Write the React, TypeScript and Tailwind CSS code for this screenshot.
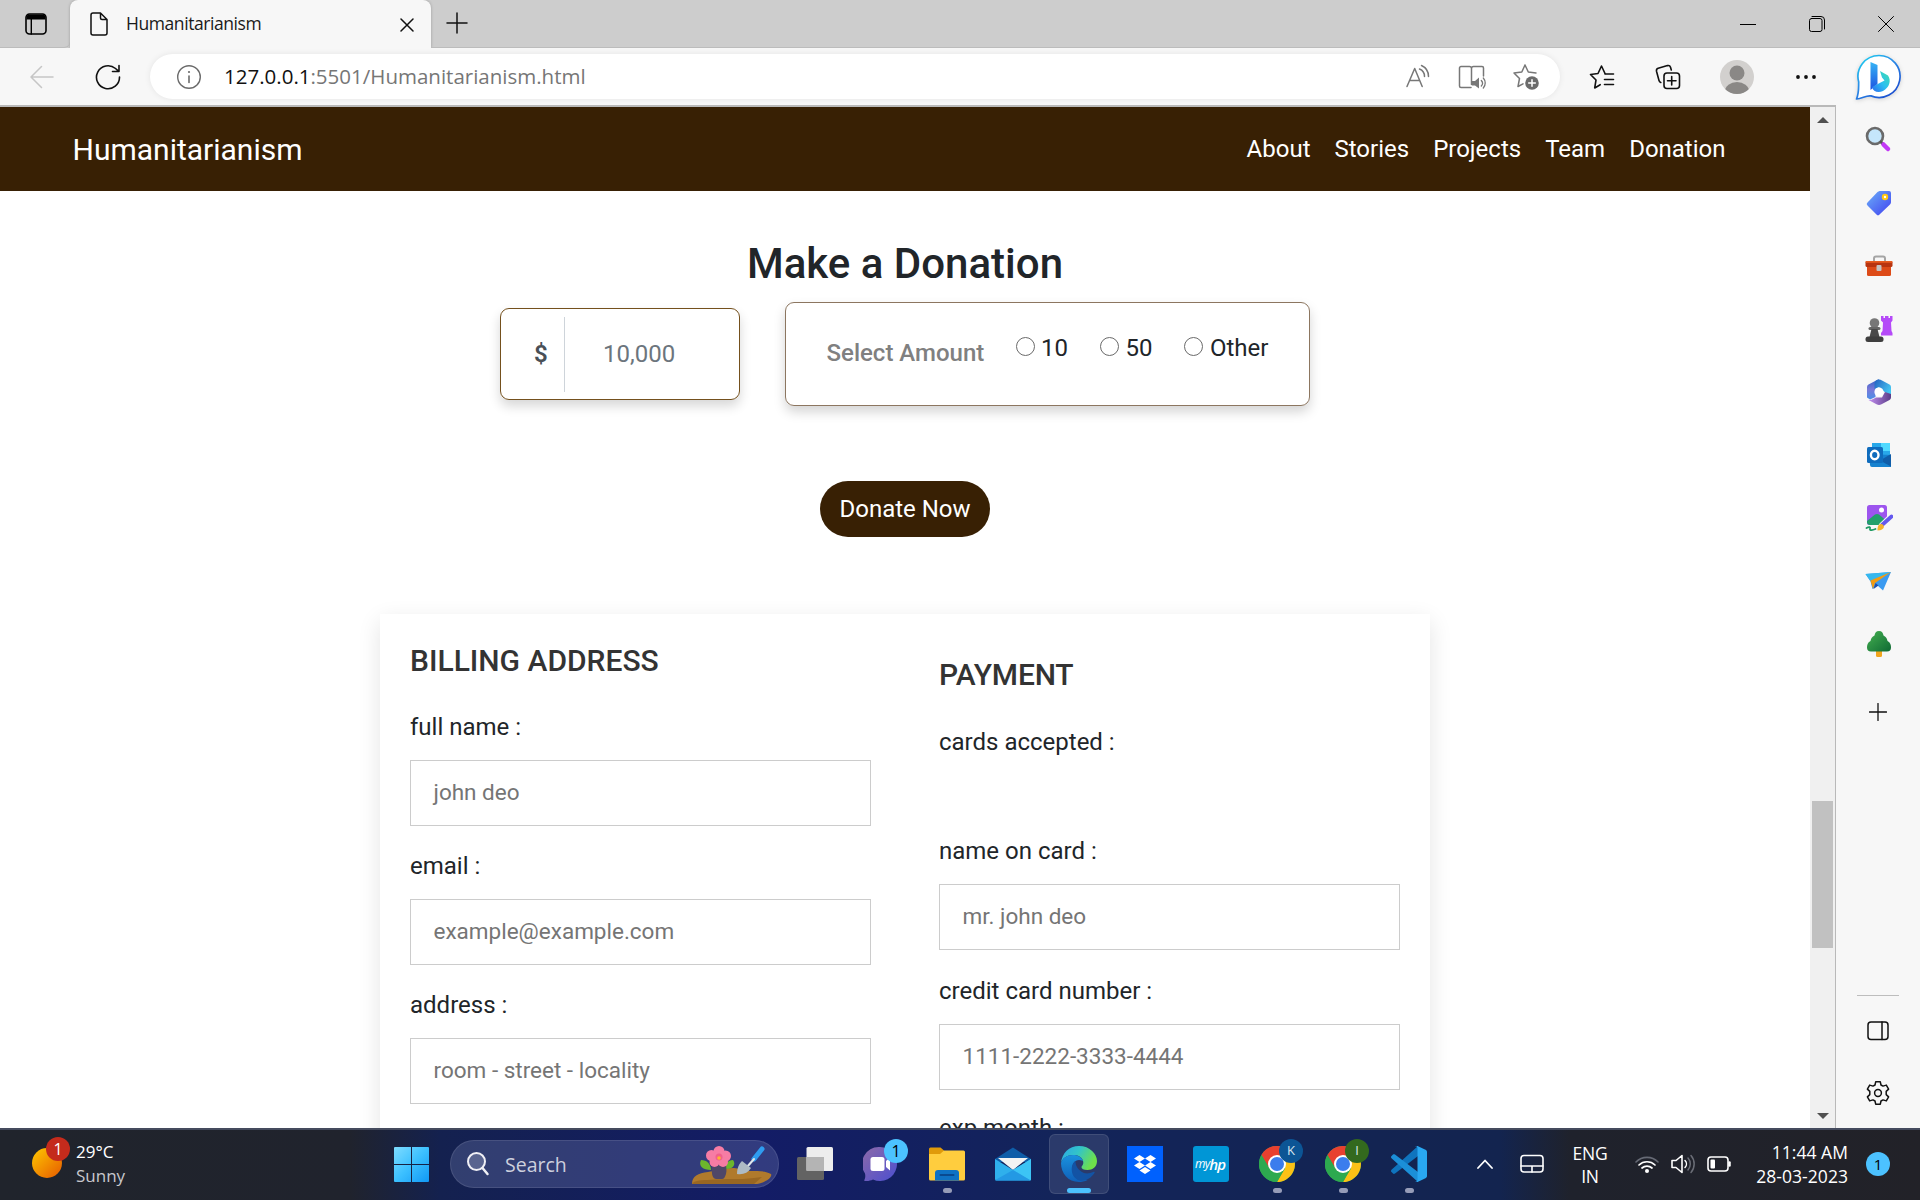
import React from "react";

type SvgProps = { className?: string; children: React.ReactNode; box: string };

function Svg({ className, children, box }: SvgProps) {
  return (
    <svg viewBox={box} className={`block shrink-0 ${className ?? ""}`} fill="none" strokeLinecap="round" strokeLinejoin="round">
      {children}
    </svg>
  );
}

/* Centres one control in a column of fixed width */
function Slot({ className, children }: { className: string; children: React.ReactNode }) {
  return <div className={`flex shrink-0 items-center justify-center ${className}`}>{children}</div>;
}

function TabStrip() {
  return (
    <div className="flex h-12 shrink-0 bg-[#cdcdcd]">
      <div className="flex w-[70px] shrink-0 items-center rounded-br-md border-b border-[#bcbcbc] pl-[25px]">
        <Svg box="0 0 22 22" className="size-[22px]">
          <rect x="1" y="1" width="20" height="20" rx="3.5" stroke="#000" strokeWidth="1.6" />
          <path d="M1.5 6.5V4.5a3 3 0 0 1 3-3h13a3 3 0 0 1 3 3v2z" fill="#000" />
          <path d="M6.3 6v15" stroke="#000" strokeWidth="1.4" />
        </Svg>
      </div>
      <div className="flex w-[361px] shrink-0 items-center rounded-t-lg bg-[#f7f7f7] pl-5 shadow-[0_0_3px_rgba(0,0,0,0.25)]">
        <Svg box="0 0 18 24" className="h-6 w-[18px]">
          <path d="M3 1h7.5L17 7.5V21a2 2 0 0 1-2 2H3a2 2 0 0 1-2-2V3a2 2 0 0 1 2-2zM10.500 1v5a1.500 1.500 0 0 0 1.500 1.500h5" stroke="#111" strokeWidth="1.5" />
        </Svg>
        <span className="mb-0.5 ml-[18px] w-[270px] text-[17.500px] leading-6 tracking-[-0.430px] text-[#1a1a1a]">Humanitarianism</span>
        <Svg box="0 0 14 14" className="mt-0.5 ml-[4px] size-3.5">
          <path d="M1 1l12 12M13 1L1 13" stroke="#111" strokeWidth="1.500" />
        </Svg>
      </div>
      <div className="flex flex-1 items-center border-b border-[#bcbcbc] pl-[15px]">
        <Svg box="0 0 22 22" className="-mt-0.5 size-[22px]">
          <path d="M11 1v20M1 11h20" stroke="#111" strokeWidth="1.500" />
        </Svg>
        <div className="ml-auto flex">
          <Slot className="w-[69px]">
            <Svg box="0 0 16 16" className="size-4"><path d="M0 8.500h16" stroke="#000" strokeWidth="1" /></Svg>
          </Slot>
          <Slot className="w-[69px]">
            <Svg box="0 0 16 16" className="size-4">
              <rect x="0.500" y="2.500" width="12.500" height="13" rx="2" stroke="#000" />
              <path d="M3 0.500h9a3.500 3.500 0 0 1 3.500 3.500v9" stroke="#000" />
            </Svg>
          </Slot>
          <Slot className="w-[69px]">
            <Svg box="0 0 16 16" className="size-4"><path d="M0.500 0.500l15 15M15.500 0.500l-15 15" stroke="#000" /></Svg>
          </Slot>
        </div>
      </div>
    </div>
  );
}

function Toolbar() {
  return (
    <div className="flex h-[57px] shrink-0 items-center bg-[#f7f7f7]">
      <Slot className="w-[66px] pl-[18px]">
        <Svg box="0 0 24 24" className="size-6"><path d="M23 12H1.500M11.500 1.500L1 12l10.500 10.500" stroke="#c6c6c6" strokeWidth="1.500" /></Svg>
      </Slot>
      <Slot className="w-[84px]">
        <Svg box="0 0 26 26" className="size-[26px]">
          <path d="M24.500 13A11.500 11.500 0 1 1 20.500 4.500L23.500 7.200M24 1.500v6h-6.500" stroke="#111" strokeWidth="1.600" />
        </Svg>
      </Slot>
      <div className="flex h-[45px] w-[1410px] shrink-0 items-center rounded-full bg-white shadow-[0_0_6px_rgba(0,0,0,0.08)]">
        <Slot className="ml-[26px] w-[26px]">
          <Svg box="0 0 26 26" className="size-[26px]">
            <circle cx="13" cy="13" r="11.300" stroke="#6b6b6b" strokeWidth="1.400" />
            <path d="M13 12v6.500" stroke="#6b6b6b" strokeWidth="1.600" />
            <circle cx="13" cy="8" r="1.100" fill="#6b6b6b" />
          </Svg>
        </Slot>
        <span className="mb-0.5 ml-[22px] flex-1 text-[20.500px] leading-7 text-[#767676]">
          <span className="text-[#111]">127.0.0.1</span>:5501/Humanitarianism.html
        </span>
        <Slot className="w-[54px]">
          <Svg box="0 0 26 26" className="mb-0.5 size-[26px]">
            <path d="M2 23.500L9.700 5.500l7.500 18M4.700 17.500h10" stroke="#777" strokeWidth="1.500" />
            <path d="M16.500 2.500a12 12 0 0 1 7 11M14.500 6a8 8 0 0 1 5 7.500" stroke="#777" strokeWidth="1.500" />
          </Svg>
        </Slot>
        <Slot className="w-[54px]">
          <Svg box="0 0 28 26" className="h-[26px] w-7">
            <path d="M13 23.500H3a1.500 1.500 0 0 1-1.500-1.500V4A1.500 1.500 0 0 1 3 2.500h8.500a2 2 0 0 1 2 2v16M13.500 4.500a2 2 0 0 1 2-2H24A1.500 1.500 0 0 1 25.500 4v8" stroke="#777" strokeWidth="1.500" />
            <path d="M14 17h3l4-3.500v11L17 21.500h-3z" fill="#777" />
            <path d="M23.300 16.500a4 4 0 0 1 0 5.500M25.300 14a7.500 7.500 0 0 1 0 10" stroke="#777" strokeWidth="1.300" />
          </Svg>
        </Slot>
        <Slot className="mr-[7px] w-[54px]">
          <Svg box="0 0 28 28" className="size-7">
            <path d="M13 2l3.300 7 7.700 1M13 2L9.800 9 2 10l5.500 5.500L6 23.500l5-2.600" stroke="#777" strokeWidth="1.500" />
            <circle cx="20" cy="20" r="6.800" fill="#6b6b6b" />
            <path d="M20 16.700v6.600M16.700 20h6.600" stroke="#fff" strokeWidth="1.500" />
          </Svg>
        </Slot>
      </div>
      <Slot className="ml-[9px] w-[66px]">
        <Svg box="0 0 26 26" className="size-[26px]">
          <path d="M16 9.500L12.500 2 9 9.500l-7.500 1 5.500 5.500-1.300 8 5.500-3.300" stroke="#111" strokeWidth="1.600" />
          <path d="M16 10h8.500M15.500 15.500h9M15.500 20.500h9" stroke="#111" strokeWidth="1.600" />
        </Svg>
      </Slot>
      <Slot className="w-[66px]">
        <Svg box="0 0 26 26" className="size-[26px]">
          <rect x="9" y="9" width="15.500" height="15.500" rx="3" stroke="#111" strokeWidth="1.600" />
          <path d="M16.700 12.500v8.500M12.500 16.700H21M5.800 18.500a3 3 0 0 1-1.800-2L1.500 7.200A2.500 2.500 0 0 1 3.200 4.300l9.300-2.700a2.500 2.500 0 0 1 3 1.700L16.300 6" stroke="#111" strokeWidth="1.600" />
        </Svg>
      </Slot>
      <Slot className="w-[71px]">
        <Svg box="0 0 34 34" className="size-[34px]">
          <clipPath id="face"><circle cx="17" cy="17" r="17" /></clipPath>
          <g clipPath="url(#face)">
            <rect width="34" height="34" fill="#d2d0ce" />
            <circle cx="17" cy="13" r="7.500" fill="#8a8886" />
            <ellipse cx="17" cy="31" rx="12" ry="9" fill="#8a8886" />
          </g>
        </Svg>
      </Slot>
      <Slot className="w-[68px]">
        <Svg box="0 0 20 4" className="h-1 w-5"><g fill="#111"><circle cx="2" cy="2" r="1.900" /><circle cx="10" cy="2" r="1.900" /><circle cx="18" cy="2" r="1.900" /></g></Svg>
      </Slot>
      <Slot className="ml-[15px] w-[46px]">
        <Svg box="0 0 46 48" className="h-12 w-[46px] drop-shadow-sm">
          <defs>
            <linearGradient id="ring" x1="0" y1="0.100" x2="0.700" y2="1"><stop stopColor="#1cd0f0" /><stop offset="0.450" stopColor="#2b8de8" /><stop offset="1" stopColor="#1b4fd0" /></linearGradient>
            <linearGradient id="bstem" x1="0" y1="0" x2="0" y2="1"><stop stopColor="#36b4f5" /><stop offset="1" stopColor="#1c52e0" /></linearGradient>
            <linearGradient id="bbowl" x1="1" y1="0" x2="0" y2="1"><stop stopColor="#3fe0a8" /><stop offset="0.500" stopColor="#2bc0f0" /><stop offset="1" stopColor="#2a6cf0" /></linearGradient>
          </defs>
          <path d="M24 2.500A21 21 0 1 1 16 42.900C11 42 7 46 1.500 46c2.500-6 2-9.500 2.200-17A21 21 0 0 1 24 2.500z" fill="#fff" stroke="url(#ring)" strokeWidth="1.700" />
          <path d="M15.500 9l7 3v19l-7 6z" fill="url(#bstem)" />
          <path d="M25 18l8 4.500c3.500 5 1.500 12-5 15.500-5 2.500-10 .5-11-4l12.500-6.500-2.500-3z" fill="url(#bbowl)" />
        </Svg>
      </Slot>
    </div>
  );
}

const NAV_LINKS = ["About", "Stories", "Projects", "Team", "Donation"];

function Navbar() {
  return (
    <nav className="flex h-[84px] shrink-0 items-center justify-between bg-[#382004] pr-[84.500px] pl-[72.500px] text-white">
      <span className="mt-0.5 text-[30px] leading-9">Humanitarianism</span>
      <div className="flex gap-6 text-2xl">
        {NAV_LINKS.map((l) => <span key={l}>{l}</span>)}
      </div>
    </nav>
  );
}

function RadioOption({ label }: { label: string }) {
  return (
    <label className="flex items-center">
      <span className="mb-1 size-[19px] rounded-full border border-[#6a6a6a] bg-white" />
      <span className="ml-[6.500px]">{label}</span>
    </label>
  );
}

function Donation() {
  return (
    <section className="flex flex-col items-center">
      <h1 className="mt-12 text-[42px] leading-[50px] font-medium">Make a Donation</h1>
      <div className="mt-[13px] flex items-start gap-[45px]">
        <div className="mt-1.5 flex h-[92px] w-[240px] items-center rounded-[9px] border border-[#74501d] shadow-[0_6px_12px_rgba(0,0,0,0.16)]">
          <span className="w-[63px] pl-[33px] font-semibold text-[#495057]">$</span>
          <span className="h-[75px] border-l border-[#ced4da]" />
          <span className="pl-[38px] text-[#6c757d]">10,000</span>
        </div>
        <div className="flex h-[104px] w-[525px] rounded-[9px] border border-[#8c7660] pt-[27px] pl-[40.500px] shadow-[0_6px_12px_rgba(0,0,0,0.17)]">
          <span className="mt-[7px] w-[189px] font-medium text-[#808080]">Select Amount</span>
          <div className="flex h-9 gap-8">
            <RadioOption label="10" />
            <RadioOption label="50" />
            <RadioOption label="Other" />
          </div>
        </div>
      </div>
      <button className="mt-[75px] h-14 w-[170px] rounded-[28px] bg-[#382004] text-white">Donate Now</button>
    </section>
  );
}

function Field({ label, hint }: { label: string; hint: string }) {
  return (
    <div>
      <div className="leading-9">{label}</div>
      <div className="mt-[15px] flex h-[66px] items-center border border-[#ccc] pb-0.5 pl-[22.500px] text-[22.500px] text-[#757575]">{hint}</div>
    </div>
  );
}

function Billing() {
  return (
    <section className="mt-[77px] flex h-[700px] w-[1050px] shrink-0 gap-[68px] self-center bg-white px-[30px] shadow-[0_7px_22px_rgba(0,0,0,0.11)]">
      <div className="w-[461px] pt-[29px]">
        <h3 className="mb-[30px] text-[30px] leading-9 font-medium text-[#333]">BILLING ADDRESS</h3>
        <div className="flex flex-col gap-[22px]">
          <Field label="full name :" hint="john deo" />
          <Field label="email :" hint="example@example.com" />
          <Field label="address :" hint="room - street - locality" />
        </div>
      </div>
      <div className="w-[461px] pt-[43px]">
        <h3 className="mb-[31px] text-[30px] leading-9 font-medium tracking-[-0.200px] text-[#333]">PAYMENT</h3>
        <div className="h-[109px] leading-9">cards accepted :</div>
        <div className="flex flex-col gap-[22.500px]">
          <Field label="name on card :" hint="mr. john deo" />
          <Field label="credit card number :" hint="1111-2222-3333-4444" />
          <div className="-mt-0.5 leading-9">exp month :</div>
        </div>
      </div>
    </section>
  );
}

function Scrollbar() {
  return (
    <div className="flex w-[26px] shrink-0 flex-col items-center border-r border-[#b9b9b9] bg-[#f0f0f0]">
      <Svg box="0 0 12 6" className="mt-[10px] h-1.5 w-3"><path d="M0 6L6 0l6 6z" fill="#505050" /></Svg>
      <div className="mt-[678px] h-[147px] w-[21px] bg-[#c1c1c1]" />
      <Svg box="0 0 12 6" className="mt-[165px] h-1.5 w-3"><path d="M0 0l6 6 6-6z" fill="#505050" /></Svg>
    </div>
  );
}

function SearchApp() {
  return (
    <Svg box="0 0 28 28" className="mr-0.5 mb-0.5 size-7">
      <circle cx="11" cy="11" r="8" fill="#c5e6fb" stroke="#6a6a6a" strokeWidth="2.600" />
      <path d="M17 17l3 3" stroke="#555" strokeWidth="3" />
      <path d="M19.500 19.500l4.500 4.500" stroke="#c239f5" strokeWidth="4.500" />
    </Svg>
  );
}
function TagApp() {
  return (
    <Svg box="0 0 28 28" className="size-7">
      <defs><linearGradient id="tag" x1="0" y1="0" x2="1" y2="1"><stop stopColor="#6cb0f8" /><stop offset="1" stopColor="#4040f0" /></linearGradient></defs>
      <path d="M14.500 2H24a2 2 0 0 1 2 2v9c0 1-.5 2-1 2.500L14.500 25.500a2 2 0 0 1-3 0L2.500 16.500a2 2 0 0 1 0-3L12.500 3z" fill="url(#tag)" />
      <circle cx="20" cy="8" r="2.200" stroke="#ffc814" strokeWidth="2" fill="#fff" />
    </Svg>
  );
}
function ToolboxApp() {
  return (
    <Svg box="0 0 28 28" className="size-7">
      <path d="M9 9V6.500A2 2 0 0 1 11 4.500h7a2 2 0 0 1 2 2V9" stroke="#a5a5a5" strokeWidth="2" />
      <rect x="2" y="12" width="24" height="12" rx="1.500" fill="#dd4b18" />
      <rect x="0.500" y="9" width="27" height="6" rx="1.500" fill="#b83410" />
      <rect x="0.500" y="9" width="27" height="1.800" rx="0.900" fill="#e85c20" />
      <rect x="11.500" y="13" width="5" height="6" rx="1" fill="#c4c4c4" />
    </Svg>
  );
}
function ChessApp() {
  return (
    <Svg box="0 0 28 28" className="size-7">
      <path d="M16 1h2.500v2H20V1h3.500v2H25V1h2.500v4.500L26 7.500 26.500 16l1 2v2.500H16V18l1.500-2L18 7.500l-2-2z" fill="#b54af8" />
      <circle cx="9.500" cy="8" r="4.800" fill="#777" />
      <rect x="3.500" y="12" width="12" height="3" rx="1.500" fill="#666" />
      <path d="M6.500 14h6l2 8h-10z" fill="#4a4a4a" />
      <rect x="0.500" y="21.500" width="18" height="5.500" rx="2.500" fill="#3f3f3f" />
    </Svg>
  );
}
function OfficeApp() {
  return (
    <Svg box="0 0 28 28" className="size-7">
      <defs>
        <linearGradient id="o1" x1="0" y1="0" x2="0" y2="1"><stop stopColor="#2f62c4" /><stop offset="0.500" stopColor="#7a78d8" /><stop offset="1" stopColor="#4a90e8" /></linearGradient>
        <linearGradient id="o2" x1="0" y1="0" x2="1" y2="0.600"><stop stopColor="#2460c0" /><stop offset="1" stopColor="#45c6f2" /></linearGradient>
        <linearGradient id="o3" x1="1" y1="0" x2="0" y2="0"><stop stopColor="#5a3d88" /><stop offset="1" stopColor="#c38ff0" /></linearGradient>
      </defs>
      <path d="M14 1L3.500 6.500A3 3 0 0 0 2 9v10.500l3 2 5.500-2.500V9z" fill="url(#o1)" />
      <path d="M11 2.500c2-1.500 4-1.500 6 0l7.500 4A3 3 0 0 1 26 9v9L19 13.500 14 9.200 9.500 11V6c0-1.500.5-2.500 1.500-3.500z" fill="url(#o2)" />
      <path d="M26 16v3.500a3 3 0 0 1-1.500 2.500l-8 4.300c-1.700.9-3.300.9-5 0L3.500 22C7 22.500 9 20.500 11 19.500h6l3-5.500z" fill="url(#o3)" />
      <circle cx="14" cy="14" r="4.600" fill="#fff" />
    </Svg>
  );
}
function OutlookApp() {
  return (
    <Svg box="0 0 28 28" className="size-7">
      <path d="M7 2h18v12H7z" fill="#28a8ea" />
      <path d="M16 2h9v8h-9z" fill="#50d9ff" />
      <path d="M4 13l22 1v12H7a2 2 0 0 1-2-2z" fill="#1682cf" />
      <path d="M26 13l-11 6.500 11 6z" fill="#105da8" />
      <rect x="2" y="6" width="16" height="16" rx="1.500" fill="#0f6cbd" />
      <ellipse cx="9.700" cy="14" rx="3.800" ry="4.200" stroke="#fff" strokeWidth="2.400" />
    </Svg>
  );
}
function ImageApp() {
  return (
    <Svg box="0 0 28 28" className="size-7">
      <rect x="2" y="1" width="20" height="20" rx="2.500" fill="#9d55ee" />
      <path d="M2 17l8-6.500c1-.8 3-.8 4 0l7 6V18a3 3 0 0 1-3 3H5a3 3 0 0 1-3-3z" fill="#22a06b" />
      <circle cx="16.500" cy="6" r="2.500" fill="#fff" />
      <path d="M26.500 12.500L17 21.500" stroke="#f7f7f7" strokeWidth="6.500" />
      <path d="M26.500 12.500L17 21" stroke="#6458ee" strokeWidth="3.800" />
      <path d="M12.500 26.500c0-4 1-7 4-6.500 3.500.5 4 6.500-4 6.500z" fill="#f5b32c" />
      <path d="M1.500 24c3-1.500 4-1 3.500 1s3 1 5.500 0" stroke="#1f9a63" strokeWidth="1.800" />
    </Svg>
  );
}
function SendApp() {
  return (
    <Svg box="0 0 28 28" className="size-7">
      <path d="M0.500 7L26 5l-8 18.500-5.500-5-5 3.500-2-7.500z" fill="#3a9af0" />
      <path d="M0.500 7L26 5 5.500 14z" fill="#35b8ee" />
      <path d="M26 5L5.500 13.500 8 22l2-6z" fill="#f39c12" />
      <path d="M8.500 22l2-6 3 2.500z" fill="#1c50b0" />
    </Svg>
  );
}
function TreeApp() {
  return (
    <Svg box="0 0 28 28" className="size-7">
      <defs><linearGradient id="tree" x1="0" y1="0" x2="1" y2="1"><stop stopColor="#45b050" /><stop offset="1" stopColor="#0f6a34" /></linearGradient></defs>
      <rect x="11" y="19" width="6" height="8" rx="1.500" fill="#f2a51e" />
      <path d="M14 1c3 0 4 2 4.500 4.500C21.500 7 22 9 22.500 11c3 1.500 3.500 4 3.500 6.500A4 4 0 0 1 22 21.500H6A4 4 0 0 1 2 17.500C2 15 2.500 12.500 5.500 11 6 9 6.500 7 9.500 5.500 10 3 11 1 14 1z" fill="url(#tree)" />
    </Svg>
  );
}

function Sidebar() {
  const apps = [SearchApp, TagApp, ToolboxApp, ChessApp, OfficeApp, OutlookApp, ImageApp, SendApp, TreeApp];
  return (
    <aside className="flex w-[84px] shrink-0 flex-col items-center bg-[#f7f7f7] pt-[3px]">
      {apps.map((App, i) => (
        <div key={i} className="flex h-[63.100px] w-full shrink-0 items-center justify-center pl-0.5"><App /></div>
      ))}
      <Svg box="0 0 18 18" className="mt-[27px] -ml-px size-[18px]"><path d="M9 0.500v17M0.500 9h17" stroke="#111" strokeWidth="1.300" /></Svg>
      <div className="mt-auto h-px w-[42px] bg-[#bdbdbd]" />
      <Svg box="0 0 22 20" className="mt-[25px] h-5 w-[22px]">
        <rect x="1" y="1" width="20" height="17.500" rx="3" stroke="#111" strokeWidth="1.500" />
        <path d="M15 1v17.500" stroke="#111" strokeWidth="1.500" />
      </Svg>
      <Svg box="0 0 24 24" className="mt-[40px] mb-[23px] size-6">
        <circle cx="12" cy="12" r="3.400" stroke="#111" strokeWidth="1.500" />
        <path d="M9.700 0.800h4.600l.7 3.200 2 1.100 3.300-1 2.300 4-2.400 2.300v3.200l2.400 2.300-2.300 4-3.300-1-2 1.100-.7 3.200H9.700L9 20l-2-1.100-3.300 1-2.300-4 2.400-2.300v-3.200L1.400 8.100l2.300-4 3.300 1L9 4z" stroke="#111" strokeWidth="1.500" />
      </Svg>
    </aside>
  );
}

function Chrome({ letter, badge }: { letter: string; badge: string }) {
  return (
    <div className="relative">
      <Svg box="0 0 36 36" className="size-9">
        <circle cx="18" cy="18" r="18" fill="#34a853" />
        <path d="M18 18L2.400 9A18 18 0 0 1 33.600 9z" fill="#e8402f" />
        <path d="M18 9.500h15.800A18 18 0 0 1 18 36l8-13.500z" fill="#fbc116" />
        <path d="M2.400 9l8 13.500L18 10z" fill="#e8402f" />
        <path d="M2.400 9a18 18 0 0 0 15.600 27l7.500-13.500-15 0z" fill="#2da94f" />
        <circle cx="18" cy="18" r="9" fill="#fff" />
        <circle cx="18" cy="18" r="7" fill="#3b7ded" />
      </Svg>
      <span className={`absolute -top-[7px] left-5 flex size-6 items-center justify-center rounded-full text-[13px] text-[#d8e4ee] ${badge}`}>{letter}</span>
    </div>
  );
}

function TaskView() {
  return (
    <Svg box="0 0 36 36" className="size-9">
      <rect x="0" y="11" width="27" height="23" rx="1.500" fill="#636363" />
      <rect x="9.500" y="1" width="26.500" height="24" rx="1.500" fill="#ededed" />
      <path d="M9.500 11H27v14H9.500z" fill="#b4b4b4" />
    </Svg>
  );
}
function Chat() {
  return (
    <div className="relative">
      <Svg box="0 0 36 36" className="size-9">
        <defs><linearGradient id="chat" x1="0" y1="0" x2="1" y2="1"><stop stopColor="#8d6aa8" /><stop offset="1" stopColor="#4c4fd0" /></linearGradient></defs>
        <path d="M17 1a17 17 0 1 1-7 32.500C7 35 3 35.500 1 34.500c1.500-2 1.500-5 1-7A17 17 0 0 1 17 1z" fill="url(#chat)" />
        <rect x="7.500" y="11" width="14" height="14" rx="2.500" fill="#fff" />
        <path d="M23 15l4-3.500v13L23 21z" fill="#fff" />
      </Svg>
      <span className="absolute -top-[7px] left-[21px] flex size-6 items-center justify-center rounded-full bg-[#4cc2ff] text-base text-black">1</span>
    </div>
  );
}
function Folder() {
  return (
    <Svg box="0 0 36 36" className="size-9">
      <path d="M0 3a1.500 1.500 0 0 1 1.500-1.500h10L15 4.500V10H0z" fill="#e09a0a" />
      <path d="M0 8h11l4-3.500h19.500A1.500 1.500 0 0 1 36 6v27a1.500 1.500 0 0 1-1.500 1.500h-33A1.500 1.500 0 0 1 0 33z" fill="#ffcd3e" />
      <path d="M6 34.500V27a3 3 0 0 1 3-3h18a3 3 0 0 1 3 3v7.500z" fill="#0f72c4" />
      <path d="M11.500 29h13" stroke="#0a4a90" strokeWidth="2" />
    </Svg>
  );
}
function Mail() {
  return (
    <Svg box="0 0 36 36" className="size-9">
      <path d="M0 13L18 1.500 36 13v3H0z" fill="#0f5da8" />
      <path d="M3 12h30L18 24z" fill="#f3f3f3" />
      <path d="M36 13v20a1.500 1.500 0 0 1-1.500 1.500h-33A1.500 1.500 0 0 1 0 33V13l18 11z" fill="#2fb0ec" />
      <path d="M36 13L18 24l17 10.500a1.500 1.500 0 0 0 1-1.500z" fill="#3cc4f5" />
      <path d="M0 13l18 11 17.500 10.300c-.3.200-.6.200-1 .2h-33c-.5 0-1-.2-1.200-.6L18 24z" fill="#2399e4" />
    </Svg>
  );
}
function EdgeLogo() {
  return (
    <Svg box="0 0 36 36" className="size-9">
      <defs>
        <linearGradient id="e1" x1="0" y1="0" x2="1" y2="0.400"><stop stopColor="#2aa6e8" /><stop offset="0.500" stopColor="#33c4c8" /><stop offset="1" stopColor="#6ee04a" /></linearGradient>
        <linearGradient id="e2" x1="0" y1="0" x2="0" y2="1"><stop stopColor="#1a92de" /><stop offset="1" stopColor="#0f5fb8" /></linearGradient>
      </defs>
      <path d="M0 17C1 7 8 0 18 0c11 0 18 8 18 15 0 6-4.500 9-9.500 9-4 0-6-1.500-6-2.800 0-1.200 1.800-1.700 1.800-4.700 0-4-4-7.500-10-7.500C6 9 1.500 12 0 17z" fill="url(#e1)" />
      <path d="M0 17c1.500-5 6-8 12-8 5 0 9 2.500 10 6-7-3-11 2-10.500 7 .5 7 7 13 15 12-3 1.500-6 2-8.500 2C7 36 0 27 0 17z" fill="url(#e2)" />
      <path d="M14.500 15c-6 4-5 17 4 19.500 5 1 11-1.500 15-7.500.5-1-.5-1.500-1.300-1-4 2-9 2-12-.5-4-3-5.700-6-5.700-10.500z" fill="#1353a4" />
    </Svg>
  );
}
function Dropbox() {
  return (
    <Svg box="0 0 36 36" className="size-9">
      <rect width="36" height="36" fill="#0061fe" />
      <path d="M12.500 9L18 12.500 12.500 16 7 12.500zM23.500 9l5.500 3.500-5.500 3.500-5.500-3.500zM12.500 16l5.500 3.500-5.500 3.500L7 19.500zM23.500 16l5.500 3.500-5.500 3.500-5.500-3.500zM18 21l5.500 3.500L18 28l-5.500-3.500z" fill="#fff" />
    </Svg>
  );
}
function MyHp() {
  return (
    <div className="flex size-9 items-center justify-center rounded-[3px] bg-[#0096d6] pr-0.5 text-white italic">
      <span className="text-[12px] tracking-[-0.8px]">my</span><span className="text-[15px] font-semibold tracking-[-1px]">hp</span>
    </div>
  );
}
function VsCode() {
  return (
    <Svg box="0 0 36 36" className="size-9">
      <path d="M27 0v10L4 27.500c-.8.500-1.500.5-2 0L.5 26c-.7-.7-.7-1.500 0-2.300z" fill="#0f74be" />
      <path d="M27 36V26L4 8.500c-.8-.5-1.500-.5-2 0L.5 10c-.7.700-.7 1.500 0 2.300z" fill="#1b8fd8" />
      <path d="M26.500 0l8 3.800c.9.400 1.500 1.200 1.500 2.200v24c0 1-.6 1.800-1.500 2.200l-8 3.800c-1 .4-2 .2-2.700-.6 1 .7 2.700.2 2.700-1.600V2.200c0-1.800-1.700-2.300-2.700-1.600.7-.8 1.700-1 2.700-.6z" fill="#29a8f2" />
    </Svg>
  );
}

function TaskItem({ children, dot, active }: { children: React.ReactNode; dot?: boolean; active?: boolean }) {
  return (
    <div className="flex w-[66px] shrink-0 justify-center">
      <div className={`relative flex h-[60px] w-[60px] items-center justify-center rounded-md ${active ? "bg-white/10 ring-1 ring-white/10 ring-inset" : ""}`}>
        {children}
        {dot && <span className="absolute bottom-[1px] h-[5px] w-[9px] rounded-full bg-[#969cb8]" />}
        {active && <span className="absolute bottom-[1px] h-[5px] w-6 rounded-full bg-[#4cc2ff]" />}
      </div>
    </div>
  );
}

function Garden() {
  return (
    <Svg box="0 0 80 40" className="h-10 w-20">
      <path d="M0 38c0-8 6-11 16-12 10-2 18-4 26-4 5 0 6 3 16 3 8 0 17 0 21 3 2 4-8 10-16 10z" fill="#b07a2c" />
      <path d="M0 38c2-3 6-4 16-4 20-2 30 0 46-2l8-1-8 7z" fill="#8a5a1c" opacity="0.600" />
      <path d="M19 24c-8 0-13-4-10-10 6 0 10 4 10 10zM34 23c8 0 10-5 7-9-5 0-8 4-7 9z" fill="#6cb52c" />
      <path d="M20 18h14c0 3 1 6 0 10-1 3-2 5-4 5h-6c-2 0-4-3-4-6-1-4 0-6 0-9z" fill="#4f4768" />
      <g fill="#f77ca4"><circle cx="27" cy="5.500" r="5.500" /><circle cx="33.500" cy="10" r="5.500" /><circle cx="31" cy="16" r="5" /><circle cx="22.500" cy="16" r="5" /><circle cx="19.500" cy="9.500" r="5.500" /></g>
      <circle cx="27" cy="11" r="3.500" fill="#f0608c" />
      <circle cx="27" cy="12" r="1.800" fill="#ffb52e" />
      <path d="M70 3L62 13" stroke="#2f9cf0" strokeWidth="5" />
      <path d="M62 13l-7 8" stroke="#dfe6ea" strokeWidth="2" />
      <path d="M50 15l9 7c-3 5-8 7-14 6 0-6 2-10 5-13z" fill="#aebbc4" />
    </Svg>
  );
}

function Taskbar() {
  return (
    <footer className="flex h-[72px] shrink-0 items-center border-t-2 border-[#454b5e] bg-[linear-gradient(90deg,#20242c_0px,#20232d_350px,#14214f_440px,#131c66_760px,#13245a_1050px,#13244f_1500px,#1f222c_1570px,#222228_1920px)] pb-0.5 text-white">
      <div className="flex w-[394px] shrink-0 items-center pl-8">
        <div className="relative h-[50px] w-[44px]">
          <Svg box="0 0 30 30" className="mt-[9px] size-[30px]">
            <defs><linearGradient id="sun" x1="0" y1="0" x2="1" y2="1"><stop stopColor="#ffc800" /><stop offset="1" stopColor="#e65a00" /></linearGradient></defs>
            <circle cx="15" cy="15" r="15" fill="url(#sun)" />
          </Svg>
          <span className="absolute -top-[2px] left-[14px] flex size-6 items-center justify-center rounded-full bg-[#c42b1c] text-base">1</span>
        </div>
        <div className="text-[17px] leading-6">
          <div>29°C</div>
          <div className="text-[#c8c8cc]">Sunny</div>
        </div>
      </div>
      <Svg box="0 0 35 35" className="size-[35px]">
        <defs><linearGradient id="win" x1="0" y1="0" x2="1" y2="1"><stop stopColor="#7fdcff" /><stop offset="0.500" stopColor="#3cc0ff" /><stop offset="1" stopColor="#1098f5" /></linearGradient></defs>
        <path d="M0 1a1 1 0 0 1 1-1h16v17H0zM18 0h16a1 1 0 0 1 1 1v16H18zM0 18h17v17H1a1 1 0 0 1-1-1zM18 18h17v16a1 1 0 0 1-1 1H18z" fill="url(#win)" />
      </Svg>
      <div className="ml-[21px] flex h-12 w-[329px] shrink-0 items-center rounded-full bg-[#7c86b8]/30 pl-4 ring-1 ring-white/10 ring-inset">
        <Svg box="0 0 24 24" className="size-6">
          <circle cx="10.500" cy="9.500" r="8.500" stroke="#f0f0f5" strokeWidth="2" fill="#59648f" />
          <path d="M16.500 16l5 6" stroke="#f0f0f5" strokeWidth="2.500" />
        </Svg>
        <span className="mt-px ml-[15px] flex-1 text-[19.500px] text-[#cdd0de]">Search</span>
        <div className="mt-1 mr-[7px]"><Garden /></div>
      </div>
      <div className="ml-[3px] flex">
        <TaskItem><TaskView /></TaskItem>
        <TaskItem><Chat /></TaskItem>
        <TaskItem dot><Folder /></TaskItem>
        <TaskItem><Mail /></TaskItem>
        <TaskItem active><EdgeLogo /></TaskItem>
        <TaskItem><Dropbox /></TaskItem>
        <TaskItem><MyHp /></TaskItem>
        <TaskItem dot><Chrome letter="K" badge="bg-[#0c5595]" /></TaskItem>
        <TaskItem dot><Chrome letter="I" badge="bg-[#33691e]" /></TaskItem>
        <TaskItem dot><VsCode /></TaskItem>
      </div>
      <Svg box="0 0 16 10" className="ml-[35px] h-2.5 w-4"><path d="M1 9l7-7.500L15 9" stroke="#fff" strokeWidth="1.800" /></Svg>
      <Svg box="0 0 24 20" className="ml-[27px] h-5 w-6">
        <rect x="1" y="1.500" width="22" height="16.500" rx="3" stroke="#fff" strokeWidth="1.600" />
        <path d="M1 12h22M12 12v6" stroke="#fff" strokeWidth="1.600" />
      </Svg>
      <div className="mt-px ml-[21px] w-[50px] text-center text-[17.500px] leading-[23px] tracking-[-0.200px]"><div>ENG</div><div>IN</div></div>
      <Svg box="0 0 24 20" className="ml-[20px] h-5 w-6">
        <path d="M1 8a15.500 15.500 0 0 1 22 0" stroke="#666a75" strokeWidth="1.600" />
        <path d="M4 11a11.500 11.500 0 0 1 16 0M7 14a7.500 7.500 0 0 1 10 0" stroke="#fff" strokeWidth="1.700" />
        <circle cx="12" cy="17" r="2" fill="#fff" />
      </Svg>
      <Svg box="0 0 25 20" className="ml-3 h-5 w-[25px]">
        <path d="M1 6.500h4l6-5v17l-6-5H1z" stroke="#fff" strokeWidth="1.600" />
        <path d="M14 6.500a5 5 0 0 1 0 7" stroke="#fff" strokeWidth="1.500" />
        <path d="M17 4a9 9 0 0 1 0 12M20 1.500a13 13 0 0 1 0 17" stroke="#6a6d76" strokeWidth="1.500" />
      </Svg>
      <Svg box="0 0 25 16" className="ml-[11px] h-4 w-[25px]">
        <rect x="1" y="1" width="20" height="14" rx="3" stroke="#fff" strokeWidth="1.600" />
        <rect x="3.500" y="3.500" width="4.500" height="9" rx="1" fill="#fff" />
        <path d="M22.500 6.500v3" stroke="#fff" strokeWidth="2.500" />
      </Svg>
      <div className="ml-auto text-right text-[17.500px] leading-6 tracking-[0.050px]"><div>11:44 AM</div><div>28-03-2023</div></div>
      <span className="mr-[30px] ml-[18px] flex size-6 shrink-0 items-center justify-center rounded-full bg-[#4cc2ff] text-[15px] text-black">1</span>
    </footer>
  );
}

export default function App() {
  return (
    <div className="flex h-[1200px] w-[1920px] flex-col overflow-hidden bg-white font-['Open_Sans','Noto_Sans',sans-serif] whitespace-nowrap">
      <TabStrip />
      <Toolbar />
      <div className="flex h-[1023px] shrink-0 bg-[#f7f7f7]">
        <div className="flex w-[1836px] shrink-0 border-t-2 border-[#b9b9b9]">
          <main className="flex h-[1021px] w-[1810px] shrink-0 flex-col overflow-hidden bg-white font-['Roboto',sans-serif] text-2xl text-[#212529]">
            <Navbar />
            <Donation />
            <Billing />
          </main>
          <Scrollbar />
        </div>
        <Sidebar />
      </div>
      <Taskbar />
    </div>
  );
}
